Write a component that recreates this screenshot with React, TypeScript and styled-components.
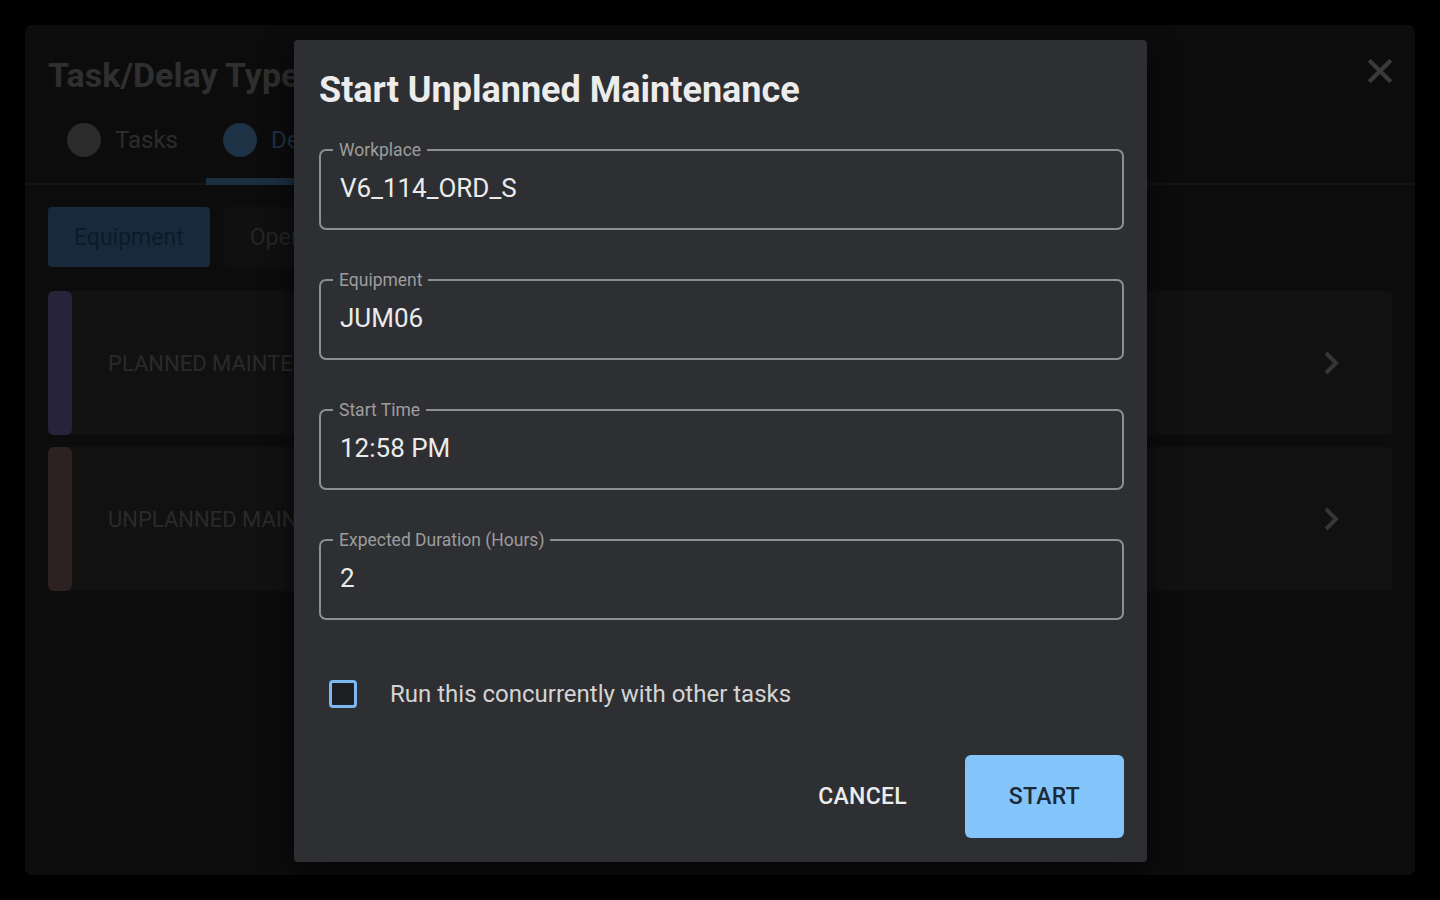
import React from "react";
import styled, { createGlobalStyle } from "styled-components";

const Global = createGlobalStyle`
  html, body { margin: 0; padding: 0; background: #000; }
  body { font-family: Roboto, "Liberation Sans", Arial, sans-serif; }
  * { box-sizing: border-box; }
`;

const Screen = styled.div`
  position: relative;
  width: 1440px;
  height: 900px;
  background: #000;
  padding: 25px;
  overflow: hidden;
`;

const Panel = styled.div`
  height: 850px;
  background: #0c0c0c;
  border-radius: 6px;
  display: flex;
  flex-direction: column;
`;

const Header = styled.div`
  display: flex;
  align-items: center;
  justify-content: space-between;
  padding: 28px 18px 0 23px;
  height: 72px;
`;

const PanelTitle = styled.h1`
  margin: 0;
  font-size: 34px;
  font-weight: 700;
  color: #2f2f2f;
  line-height: 44px;
`;

const CloseBtn = styled.button`
  border: none;
  background: transparent;
  padding: 0;
  width: 34px;
  height: 34px;
  display: flex;
  align-items: center;
  justify-content: center;
  margin-top: -8px;
  color: #3a3a3a;
`;

const Tabs = styled.div`
  display: flex;
  padding: 0 23px;
  margin-top: 13px;
  border-bottom: 2px solid #141414;
  height: 75px;
`;

const Tab = styled.div<{ $active?: boolean }>`
  width: 158px;
  display: flex;
  align-items: center;
  gap: 14px;
  padding-left: ${(p) => (p.$active ? 17 : 19)}px;
  padding-bottom: 8px;
  font-size: 24px;
  color: ${(p) => (p.$active ? "#1e3245" : "#2c2c2c")};
  border-bottom: 7px solid ${(p) => (p.$active ? "#1c2f41" : "transparent")};
  margin-bottom: -2px;
`;

const Dot = styled.span<{ $active?: boolean }>`
  width: 34px;
  height: 34px;
  border-radius: 50%;
  background: ${(p) => (p.$active ? "#1e3245" : "#2b2b2b")};
`;

const Segments = styled.div`
  display: flex;
  gap: 14px;
  padding: 22px 23px 0;
`;

const Segment = styled.div<{ $active?: boolean }>`
  height: 60px;
  padding: 0 26px;
  display: flex;
  align-items: center;
  border-radius: 4px;
  font-size: 23px;
  background: ${(p) => (p.$active ? "#172a3b" : "#101010")};
  color: ${(p) => (p.$active ? "#0d1b28" : "#252525")};
`;

const Rows = styled.div`
  display: flex;
  flex-direction: column;
  gap: 12px;
  padding: 24px 23px 0;
`;

const Row = styled.div`
  height: 144px;
  background: #111;
  border-radius: 4px;
  display: flex;
  align-items: center;
  padding-right: 46px;
`;

const Bar = styled.div<{ $color: string }>`
  width: 24px;
  align-self: stretch;
  border-radius: 6px;
  background: ${(p) => p.$color};
`;

const RowLabel = styled.div`
  flex: 1;
  padding-left: 36px;
  font-size: 22px;
  color: #2a2a2a;
  text-transform: uppercase;
`;

const Chevron = styled.span`
  color: #363636;
  display: flex;
`;

const Dialog = styled.div`
  position: absolute;
  left: 294px;
  top: 40px;
  width: 853px;
  height: 822px;
  background: #2e2f32;
  border-radius: 4px;
  box-shadow: 0 10px 30px rgba(0, 0, 0, 0.6);
  padding: 29px 23px 24px 25px;
  display: flex;
  flex-direction: column;
`;

const DialogTitle = styled.h2`
  margin: 0;
  font-size: 36px;
  font-weight: 700;
  line-height: 42px;
  color: #ececec;
`;

const Fields = styled.div`
  display: flex;
  flex-direction: column;
  gap: 40px;
  margin-top: 29px;
`;

const Field = styled.fieldset`
  margin: 0;
  border: 2px solid #8d8e90;
  border-radius: 7px;
  padding: 13px 20px 25px 19px;
  min-width: 0;
`;

const Legend = styled.legend`
  margin-left: -7px;
  padding: 0 6px;
  font-size: 17.5px;
  line-height: 20px;
  color: #9d9d9d;
`;

const Value = styled.div`
  font-size: 26px;
  line-height: 30px;
  color: #ebebeb;
`;

const CheckRow = styled.label`
  display: flex;
  align-items: center;
  gap: 33px;
  margin-top: 60px;
  padding-left: 10px;
  font-size: 24px;
  color: #d4d4d4;
  height: 28px;
`;

const Box = styled.span`
  width: 28px;
  height: 28px;
  border: 3px solid #7cb9f2;
  border-radius: 4px;
  background: #1e1f22;
`;

const Actions = styled.div`
  display: flex;
  justify-content: flex-end;
  align-items: center;
  gap: 34px;
  margin-top: 47px;
`;

const TextButton = styled.button`
  border: none;
  background: transparent;
  font-family: inherit;
  font-size: 23px;
  font-weight: 500;
  color: #ececec;
  letter-spacing: 0.3px;
  padding: 0 24px;
  height: 83px;
`;

const PrimaryButton = styled.button`
  border: none;
  background: #83c5fb;
  border-radius: 6px;
  font-family: inherit;
  font-size: 23px;
  font-weight: 500;
  color: #1b2a38;
  letter-spacing: 0.3px;
  width: 159px;
  height: 83px;
`;

const fields = [
  { label: "Workplace", value: "V6_114_ORD_S" },
  { label: "Equipment", value: "JUM06" },
  { label: "Start Time", value: "12:58 PM" },
  { label: "Expected Duration (Hours)", value: "2" },
];

const ChevronIcon = () => (
  <svg width="30" height="30" viewBox="0 0 24 24">
    <path d="M8 4 L16 12 L8 20" stroke="currentColor" strokeWidth="3.2" fill="none" />
  </svg>
);

export default function App() {
  return (
    <>
      <Global />
      <Screen>
        <Panel>
          <Header>
            <PanelTitle>Task/Delay Types</PanelTitle>
            <CloseBtn aria-label="close">
              <svg width="28" height="28" viewBox="0 0 24 24">
                <path d="M4 4 L20 20 M20 4 L4 20" stroke="currentColor" strokeWidth="3.6" strokeLinecap="square" />
              </svg>
            </CloseBtn>
          </Header>
          <Tabs>
            <Tab>
              <Dot />
              Tasks
            </Tab>
            <Tab $active>
              <Dot $active />
              Delays
            </Tab>
          </Tabs>
          <Segments>
            <Segment $active>Equipment</Segment>
            <Segment>Operator</Segment>
          </Segments>
          <Rows>
            <Row>
              <Bar $color="#26233a" />
              <RowLabel>Planned Maintenance</RowLabel>
              <Chevron>
                <ChevronIcon />
              </Chevron>
            </Row>
            <Row>
              <Bar $color="#2d2121" />
              <RowLabel>Unplanned Maintenance</RowLabel>
              <Chevron>
                <ChevronIcon />
              </Chevron>
            </Row>
          </Rows>
        </Panel>

        <Dialog role="dialog">
          <DialogTitle>Start Unplanned Maintenance</DialogTitle>
          <Fields>
            {fields.map((f) => (
              <Field key={f.label}>
                <Legend>{f.label}</Legend>
                <Value>{f.value}</Value>
              </Field>
            ))}
          </Fields>
          <CheckRow>
            <Box />
            Run this concurrently with other tasks
          </CheckRow>
          <Actions>
            <TextButton>CANCEL</TextButton>
            <PrimaryButton>START</PrimaryButton>
          </Actions>
        </Dialog>
      </Screen>
    </>
  );
}
